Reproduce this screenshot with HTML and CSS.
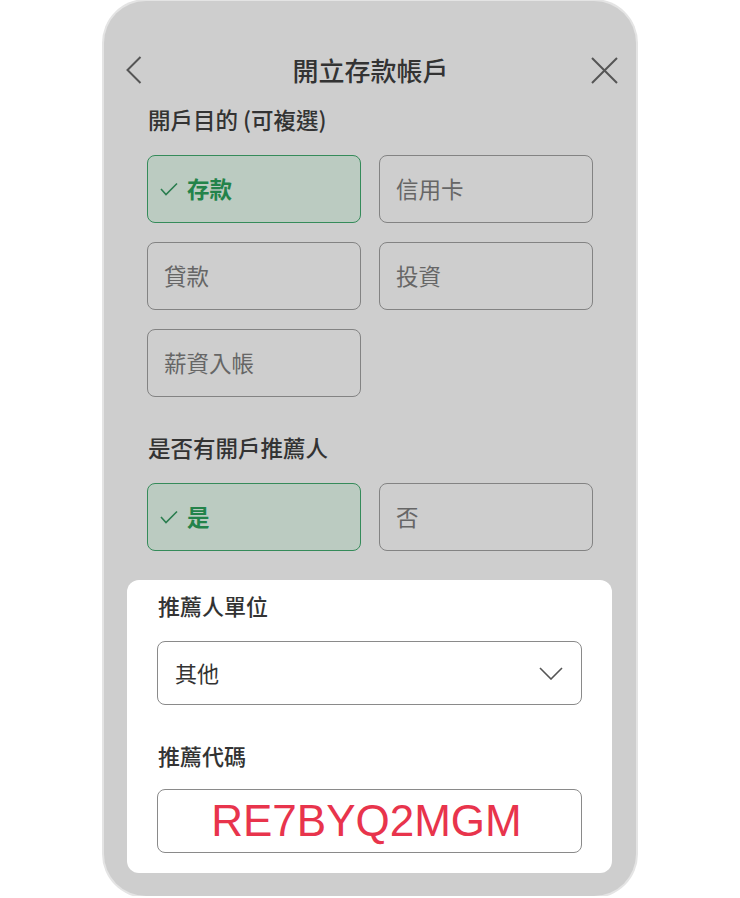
FILE: index.html
```html
<!DOCTYPE html>
<html lang="zh-Hant">
<head>
<meta charset="utf-8">
<title>開立存款帳戶</title>
<link rel="stylesheet" href="styles.css">
</head>
<body>
<div class="frame">
  <header class="header">
    <svg class="icon-back" width="16" height="28" viewBox="0 0 16 28"><polyline points="14.5,1 1.5,14 14.5,27" fill="none" stroke="#555" stroke-width="2"/></svg>
    <h1 class="title">開立存款帳戶</h1>
    <svg class="icon-close" width="27" height="27" viewBox="0 0 27 27"><path d="M1 1 L26 26 M26 1 L1 26" fill="none" stroke="#555" stroke-width="2"/></svg>
  </header>

  <div class="section">
    <div class="label">開戶目的 (可複選)</div>
    <div class="chips">
      <div class="chip selected"><svg class="check" width="18" height="14" viewBox="0 0 18 14"><polyline points="1,7 6,12.5 17,1.5" fill="none" stroke="#2a7d4f" stroke-width="1.6"/></svg>存款</div>
      <div class="chip">信用卡</div>
      <div class="chip">貸款</div>
      <div class="chip">投資</div>
      <div class="chip">薪資入帳</div>
    </div>

    <div class="label label-gap">是否有開戶推薦人</div>
    <div class="chips">
      <div class="chip selected"><svg class="check" width="18" height="14" viewBox="0 0 18 14"><polyline points="1,7 6,12.5 17,1.5" fill="none" stroke="#2a7d4f" stroke-width="1.6"/></svg>是</div>
      <div class="chip">否</div>
    </div>
  </div>

  <div class="panel">
    <div class="label">推薦人單位</div>
    <div class="select">
      <span>其他</span>
      <svg class="chevron" width="24" height="13" viewBox="0 0 24 13"><polyline points="1,1 12,12 23,1" fill="none" stroke="#555" stroke-width="1.6"/></svg>
    </div>
    <div class="label label-gap2">推薦代碼</div>
    <div class="code-input">RE7BYQ2MGM</div>
  </div>
</div>
</body>
</html>
```

FILE: styles.css
```css
* { box-sizing: border-box; }

html, body {
  margin: 0;
  padding: 0;
  background: #ffffff;
}

body {
  font-family: "Noto Sans CJK TC", "Noto Sans", sans-serif;
  color: #333;
}

.frame {
  width: 532px;
  height: 895px;
  margin: 1px 0 0 104px;
  background: #cecece;
  border-radius: 42px;
  box-shadow: 0 0 0 2px #e4e4e4;
  display: flex;
  flex-direction: column;
  padding-top: 43px;
}

.header {
  height: 52px;
  display: flex;
  align-items: center;
  justify-content: space-between;
  padding: 0 18px 0 22px;
}

.title {
  margin: 0;
  font-size: 26px;
  font-weight: 500;
  color: #333;
  line-height: 52px;
  padding-left: 8px;
}

.section {
  padding: 10px 43px 0 43px;
}

.label {
  font-size: 22.5px;
  font-weight: 500;
  line-height: 26px;
  padding: 0 0 4px 1px;
  color: #333;
}

.label-gap {
  margin-top: 37px;
}

.chips {
  margin-top: 19px;
  display: grid;
  grid-template-columns: 214px 214px;
  column-gap: 18px;
  row-gap: 19px;
}

.chip {
  height: 68px;
  border: 1.5px solid #838383;
  border-radius: 8px;
  display: flex;
  align-items: center;
  padding: 0 0 3px 16px;
  font-size: 22.5px;
  color: #666;
}

.chip.selected {
  background: #bbcbc1;
  border-color: #358b5a;
  color: #23834a;
  font-weight: 700;
  padding-left: 12px;
}

.check {
  margin: 2px 9px 0 0;
}

.panel {
  margin: 29px 24px 0 23px;
  background: #ffffff;
  border-radius: 12px;
  padding: 12px 30px 20px 30px;
}

.select {
  margin-top: 19px;
  height: 64px;
  border: 1.5px solid #8a8a8a;
  border-radius: 8px;
  display: flex;
  align-items: center;
  justify-content: space-between;
  padding: 0 18px 2px 17px;
  font-size: 22px;
  color: #333;
}

.chevron {
  margin-top: 2px;
}

.panel .label {
  font-size: 22px;
}

.label-gap2 {
  margin-top: 37px;
}

.code-input {
  margin-top: 17px;
  height: 64px;
  border: 1.5px solid #8a8a8a;
  border-radius: 8px;
  display: flex;
  align-items: center;
  justify-content: center;
  font-family: "Liberation Sans", Arial, sans-serif;
  font-size: 44px;
  color: #e8344c;
  padding-right: 6px;
}
```
